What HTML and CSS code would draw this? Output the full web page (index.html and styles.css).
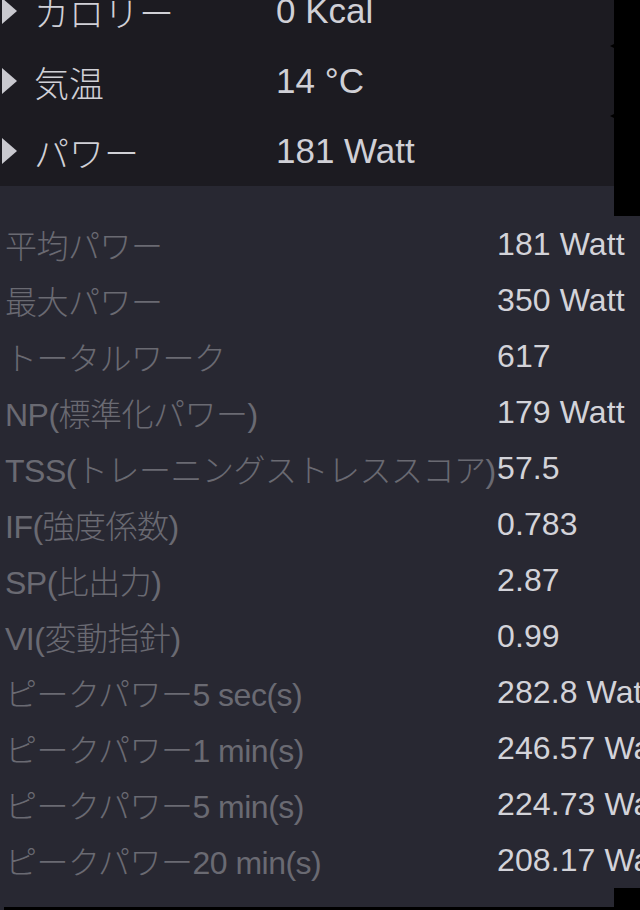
FILE: index.html
```html
<!DOCTYPE html>
<html lang="ja">
<head>
<meta charset="utf-8">
<title>Stats</title>
<link rel="stylesheet" href="styles.css">
</head>
<body>
<div class="screen">
  <section class="top">
    <div class="top-panel">
      <div class="trow"><span class="tri"></span><span class="tlabel">カロリー</span><span class="tval">0 Kcal</span></div>
      <div class="trow"><span class="tri"></span><span class="tlabel">気温</span><span class="tval">14 °C</span></div>
      <div class="trow"><span class="tri"></span><span class="tlabel">パワー</span><span class="tval">181 Watt</span></div>
    </div>
    <div class="gutter"></div>
  </section>
  <section class="stats">
    <div class="cap cap-top"><span class="cap-block"></span></div>
    <div class="srow"><span class="slabel">平均パワー</span><span class="sval">181 Watt</span></div>
    <div class="srow"><span class="slabel">最大パワー</span><span class="sval">350 Watt</span></div>
    <div class="srow"><span class="slabel">トータルワーク</span><span class="sval">617</span></div>
    <div class="srow"><span class="slabel">NP(標準化パワー)</span><span class="sval">179 Watt</span></div>
    <div class="srow"><span class="slabel">TSS(トレーニングストレススコア)</span><span class="sval">57.5</span></div>
    <div class="srow"><span class="slabel">IF(強度係数)</span><span class="sval">0.783</span></div>
    <div class="srow"><span class="slabel">SP(比出力)</span><span class="sval">2.87</span></div>
    <div class="srow"><span class="slabel">VI(変動指針)</span><span class="sval">0.99</span></div>
    <div class="srow"><span class="slabel">ピークパワー5 sec(s)</span><span class="sval">282.8 Watt</span></div>
    <div class="srow"><span class="slabel">ピークパワー1 min(s)</span><span class="sval">246.57 Watt</span></div>
    <div class="srow"><span class="slabel">ピークパワー5 min(s)</span><span class="sval">224.73 Watt</span></div>
    <div class="srow"><span class="slabel">ピークパワー20 min(s)</span><span class="sval">208.17 Watt</span></div>
    <div class="cap cap-bottom"><span class="cap-block"></span></div>
  </section>
  <div class="bottom"><span class="bottom-edge"></span></div>
</div>
</body>
</html>
```

FILE: styles.css
```css
html, body {
  margin: 0;
  padding: 0;
  background: #000;
}

.screen {
  width: 640px;
  height: 910px;
  overflow: hidden;
  font-family: "Liberation Sans", "Noto Sans CJK JP", sans-serif;
}

.top {
  display: flex;
  margin-top: -24px;
}

.top-panel {
  width: 614px;
  background: #1c1b21;
}

.gutter {
  flex: 1;
  background: #000;
}

.trow {
  position: relative;
  display: flex;
  align-items: center;
  height: 70px;
  font-size: 35px;
  color: #d0d0d6;
  white-space: nowrap;
}

.trow::after {
  content: "";
  position: absolute;
  right: 0;
  bottom: -2px;
  border-style: solid;
  border-width: 2px 4px 2px 0;
  border-color: transparent #000 transparent transparent;
}

.trow:last-child::after {
  display: none;
}

.tri {
  width: 0;
  height: 0;
  margin-left: 2px;
  border-style: solid;
  border-width: 13px 0 13px 15px;
  border-color: transparent transparent transparent #c9c9cf;
}

.tlabel {
  width: 242px;
  margin-left: 17px;
  font-weight: 300;
}

.tval {
  flex: 1;
}

.stats {
  background: #282832;
}

.cap {
  display: flex;
  justify-content: flex-end;
}

.cap-top {
  height: 30px;
}

.cap-bottom {
  height: 19px;
  align-items: flex-end;
}

.cap-block {
  width: 26px;
  height: 100%;
  background: #000;
}

.srow {
  display: flex;
  align-items: center;
  height: 56px;
  font-size: 32px;
  white-space: nowrap;
}

.slabel {
  width: 497px;
  flex: none;
  padding-left: 5px;
  box-sizing: border-box;
  color: #6a6a72;
  font-weight: 300;
  letter-spacing: -0.5px;
}

.sval {
  color: #d3d3d9;
  letter-spacing: 0.1px;
}

.bottom {
  height: 3px;
  display: flex;
  background: #000;
}

.bottom-edge {
  width: 4px;
  background: #282832;
}
```
